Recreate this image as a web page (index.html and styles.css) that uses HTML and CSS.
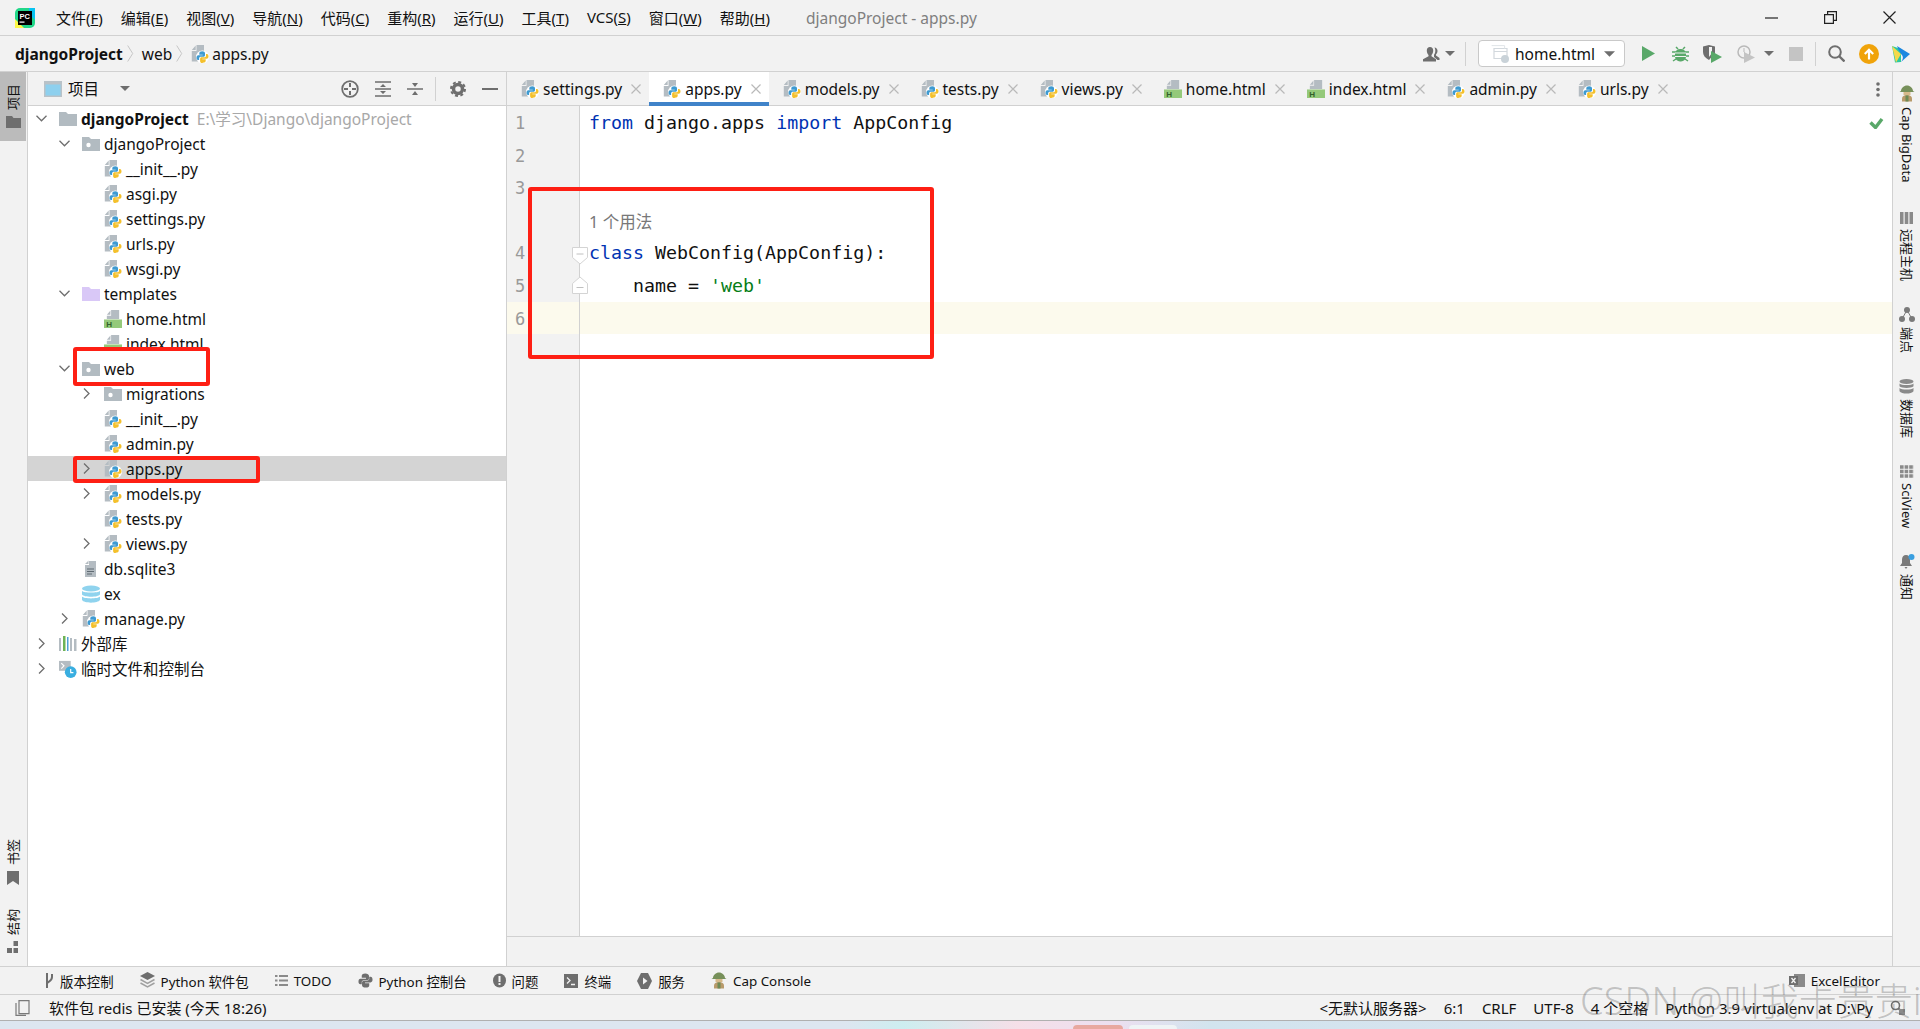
FILE: index.html
```html
<!DOCTYPE html>
<html lang="zh-CN">
<head>
    <meta charset="UTF-8">
    <title>djangoProject - apps.py</title>
    <link rel="stylesheet" href="styles.css">
</head>
<body>
<svg class="sprite" xmlns="http://www.w3.org/2000/svg">
    <symbol id="py" viewBox="0 0 18 18">
        <path fill="#b4bcc2" d="M5.500 0H13v7H7.500v9.500H.8V6h4.700zM.8 5l3.900-4.600V5z"/>
        <circle cx="11.500" cy="12" r="6.500" fill="#fff"/>
        <path fill="#3d9ad1" d="M11.300 6.300c-2 0-3 .7-3 2v1.400h3.400v.6H7.200c-1.100 0-1.700 1-1.700 2.400 0 1.300.6 2.300 1.600 2.300h1v-1.700c0-1 .8-1.600 1.800-1.600h2.600c.8 0 1.500-.6 1.500-1.500V8.300c0-1.100-1-2-2.700-2z"/>
        <path fill="#f4c02c" d="M11.700 17.700c2 0 3-.7 3-2v-1.400h-3.400v-.6h4.500c1.100 0 1.700-1 1.700-2.400 0-1.300-.6-2.300-1.600-2.300h-.9v1.700c0 1-.8 1.600-1.800 1.600h-2.600c-.8 0-1.500.6-1.500 1.500v2.400c0 1.100 1 1.900 2.600 2.500z"/>
    </symbol>
    <symbol id="html" viewBox="0 0 19 19">
        <path fill="#b4bcc2" d="M7.500 0H16v9.500H3V6h4.500zM3 5l3.800-4.500V5z"/>
        <rect y="10" width="19" height="9" fill="#94c97a"/>
        <text x="2.500" y="17.800" font-family="Liberation Sans" font-size="8.500" font-weight="700" fill="#33602a">H</text>
    </symbol>
    <symbol id="folder" viewBox="0 0 18 18">
        <path fill="#b2bbc1" d="M0 2h7l2 2h9v12H0z"/>
    </symbol>
    <symbol id="folder-dot" viewBox="0 0 18 18">
        <path fill="#b2bbc1" d="M0 2h7l2 2h9v12H0z"/>
        <circle cx="6.500" cy="10" r="2.200" fill="#fff"/>
    </symbol>
    <symbol id="folder-tpl" viewBox="0 0 18 18">
        <path fill="#d9c8f7" d="M0 2h7l2 2h9v12H0z"/>
    </symbol>
    <symbol id="down" viewBox="0 0 11 7">
        <path fill="none" stroke="#6e6e6e" stroke-width="1.300" d="M.5.800l5 5 5-5"/>
    </symbol>
    <symbol id="right" viewBox="0 0 11 11">
        <path fill="none" stroke="#6e6e6e" stroke-width="1.300" d="M3 .5l5 5-5 5"/>
    </symbol>
    <symbol id="crumb" viewBox="0 0 7 17">
        <path fill="none" stroke="#c6c6c6" d="M.7.500l5 8-5 8"/>
    </symbol>
    <symbol id="close" viewBox="0 0 10 10">
        <path fill="none" stroke="#b9b9b9" stroke-width="1.200" d="M.5.500l9 9m0-9l-9 9"/>
    </symbol>
    <symbol id="pyface" viewBox="0 0 16 16">
        <path fill="#6e6e6e" d="M7.800.500C5 .5 4 1.500 4 3v2h4.500v1H2.600C1.200 6 .5 7.200.5 9s.8 3 2 3H4V9.800c0-1.200 1-2 2.300-2h3.500c1 0 1.900-.9 1.900-2V3c0-1.500-1.600-2.500-3.900-2.500z"/>
        <path fill="#6e6e6e" d="M8.200 15.500c2.800 0 3.800-1 3.800-2.500v-2H7.500v-1h5.900c1.400 0 2.100-1.200 2.100-3s-.8-3-2-3H12v2.200c0 1.200-1 2-2.300 2H6.200c-1 0-1.900.9-1.900 2V13c0 1.500 1.600 2.500 3.900 2.500z"/>
    </symbol>
    <symbol id="cap" viewBox="0 0 16 17">
        <path fill="#77905a" d="M2 6c0-3 3-5.500 6-5.500S14 3 14 6l1.500 1h-15z"/>
        <rect x="4.500" y="7" width="7" height="3" fill="#d6b98a"/>
        <path fill="#b89a6a" d="M3 16.500v-3c0-2 2-3.500 5-3.500s5 1.500 5 3.500v3z"/>
        <path fill="#6d8a55" d="M6.500 10.500h3v6h-3z"/>
    </symbol>
</svg>

<header class="titlebar">
    <svg class="logo" width="20" height="20" viewBox="0 0 20 20">
        <rect width="20" height="20" rx="5" fill="#21d789"/>
        <path d="M20 0v12l-6-6V0z" fill="#07c3f2"/>
        <path d="M0 20v-9l9 9z" fill="#fcf84a"/>
        <rect x="3" y="3" width="14" height="14" fill="#000"/>
        <text x="4.500" y="10.500" font-family="Liberation Sans" font-size="7.500" font-weight="700" fill="#fff">PC</text>
        <rect x="4.500" y="13.500" width="5" height="1.200" fill="#fff"/>
    </svg>
    <nav class="menu">
        <span>文件(<u>F</u>)</span>
        <span>编辑(<u>E</u>)</span>
        <span>视图(<u>V</u>)</span>
        <span>导航(<u>N</u>)</span>
        <span>代码(<u>C</u>)</span>
        <span>重构(<u>R</u>)</span>
        <span>运行(<u>U</u>)</span>
        <span>工具(<u>T</u>)</span>
        <span>VCS(<u>S</u>)</span>
        <span>窗口(<u>W</u>)</span>
        <span>帮助(<u>H</u>)</span>
    </nav>
    <div class="window-title">djangoProject - apps.py</div>
    <div class="window-btns">
        <svg width="13" height="13" viewBox="0 0 13 13"><path stroke="#222" stroke-width="1.200" d="M0 7h13"/></svg>
        <svg width="13" height="13" viewBox="0 0 13 13"><path fill="none" stroke="#222" stroke-width="1.200" d="M.6 3.600h8.800v8.800H.6zM3.600 3.600V.6h8.800v8.800H9.400"/></svg>
        <svg width="13" height="13" viewBox="0 0 13 13"><path stroke="#222" stroke-width="1.200" d="M.5.500l12 12m0-12l-12 12"/></svg>
    </div>
</header>

<div class="navbar">
    <div class="crumbs">
        <b>djangoProject</b>
        <svg class="crumb-sep"><use href="#crumb"/></svg>
        <span>web</span>
        <svg class="crumb-sep"><use href="#crumb"/></svg>
        <svg class="ic crumb-file"><use href="#py"/></svg>
        <span>apps.py</span>
    </div>
    <div class="actions">
        <svg width="18" height="16" viewBox="0 0 18 16"><path fill="#6e6e6e" d="M7 1c2 0 3.200 1.500 3.200 3.500S9.300 8 8.500 9v1.200l4.500 3V15.500H0v-2.300l5.500-3V9c-.8-1-1.700-2.500-1.700-4.500S5 1 7 1z"/><path fill="#6e6e6e" d="M11.500 1.500c1.700 0 3 1.300 3 3.200 0 1.600-.7 3-1.500 3.800v1l3.500 2.500v2h-2l-3.500-3V8.800c.8-1 1.300-2.600 1.300-4.100 0-1-.2-2.200-.8-3.200z"/></svg>
        <svg class="caret user-caret" viewBox="0 0 10 5"><path d="M0 0h10L5 5z"/></svg>
        <i class="vsep sep-a"></i>
        <div class="run-combo">
            <svg width="18" height="18" viewBox="0 0 18 18"><path fill="none" stroke="#d2d8dd" stroke-width="1.200" d="M3 3.500h13v10H3zM3 6.500h13"/><path fill="none" stroke="#e1e5e8" d="M.6.600h13v3"/><circle cx="14" cy="14" r="4" fill="#c9d2d8"/></svg>
            <span>home.html</span>
            <svg class="caret" viewBox="0 0 10 5"><path d="M0 0h10L5 5z"/></svg>
        </div>
        <svg class="run" width="13" height="15" viewBox="0 0 13 15"><path fill="#59a869" d="M0 0l13 7.500L0 15z"/></svg>
        <svg class="bug" width="17" height="17" viewBox="0 0 17 17"><g fill="none" stroke="#59a869" stroke-width="1.500"><path d="M4 2l2 2M13 2l-2 2M0 7h17M0 11h17M1 16l3-2M16 16l-3-2"/></g><rect x="3" y="4" width="11" height="12.500" rx="5" fill="#59a869"/><path stroke="#f2f2f2" d="M3 8h11M3 11.500h11"/></svg>
        <svg class="cover" width="19" height="18" viewBox="0 0 19 18"><path fill="#6e6e6e" d="M0 1.500L6 0l6 1.500V8L6 15C2 13 0 10 0 7z"/><path fill="#f2f2f2" d="M6 2h3v6l-3 4z"/><path fill="#59a869" d="M8 6l11 6-11 6z"/></svg>
        <svg class="profile" width="18" height="18" viewBox="0 0 18 18"><circle cx="7" cy="7" r="6" fill="none" stroke="#b9b9b9" stroke-width="1.500"/><path fill="none" stroke="#b9b9b9" d="M7 3v4l2 2"/><path fill="#c4c4c4" d="M7 7l11 5.500L7 18z"/></svg>
        <svg class="caret profile-caret" viewBox="0 0 10 5"><path d="M0 0h10L5 5z"/></svg>
        <i class="stop"></i>
        <i class="vsep sep-b"></i>
        <svg class="search" width="17" height="17" viewBox="0 0 17 17"><circle cx="7" cy="7" r="5.800" fill="none" stroke="#6e6e6e" stroke-width="2"/><path stroke="#6e6e6e" stroke-width="2.400" d="M11 11l5.500 5.500"/></svg>
        <svg class="update" width="20" height="20" viewBox="0 0 20 20"><circle cx="10" cy="10" r="10" fill="#f0a30a"/><path fill="none" stroke="#fff" stroke-width="2.200" d="M10 15.500V6M5.800 10L10 5.800l4.200 4.200"/></svg>
        <svg class="brand" width="18" height="18" viewBox="0 0 18 18"><path fill="#2ac9a0" d="M0 1l9 3v13L3 17.500z"/><path fill="#f3d94b" d="M0 1l9 8-5 8.500z"/><path fill="#1b87e0" d="M5 1l13 8-9 8c2-3 3-5 0-8-1-2-3-5-4-8z"/></svg>
    </div>
</div>

<div class="workspace">
    <aside class="stripe stripe-left">
        <div class="stripe-btn is-active">
            <span>项目</span>
            <svg width="15" height="12" viewBox="0 0 15 12"><path fill="#6e6e6e" d="M0 0h6l1.500 2H15v10H0z"/></svg>
        </div>
        <div class="stripe-btn bookmarks">
            <span>书签</span>
            <svg width="12" height="14" viewBox="0 0 12 14"><path fill="#6e6e6e" d="M0 0h12v14L6 10l-6 4z"/></svg>
        </div>
        <div class="stripe-btn">
            <span>结构</span>
            <svg width="12" height="12" viewBox="0 0 12 12"><path fill="#6e6e6e" d="M6.500 0H11v5H6.500zM0 7h5v5H0zM6.500 7H11v5H6.500z"/></svg>
        </div>
    </aside>

    <section class="project">
        <div class="panel-head">
            <svg width="18" height="16" viewBox="0 0 18 16"><rect width="18" height="16" fill="#b9c2c8"/><rect x="1.500" y="3.500" width="15" height="11" fill="#8ed0ee"/></svg>
            <span class="panel-title">项目</span>
            <svg class="caret panel-caret" viewBox="0 0 10 5"><path d="M0 0h10L5 5z"/></svg>
            <div class="panel-tools">
                <svg width="18" height="18" viewBox="0 0 18 18"><circle cx="9" cy="9" r="7.800" fill="none" stroke="#6e6e6e" stroke-width="1.800"/><path stroke="#6e6e6e" stroke-width="2" d="M9 3v4M9 11v4M3 9h4M11 9h4"/></svg>
                <svg width="16" height="16" viewBox="0 0 16 16"><path stroke="#6e6e6e" stroke-width="1.500" d="M0 1h16M0 15h16M0 8h16" /><path fill="#6e6e6e" d="M8 3l3 3H5zM8 13l-3-3h6z"/></svg>
                <svg width="16" height="16" viewBox="0 0 16 16"><path stroke="#6e6e6e" stroke-width="1.500" d="M0 8h16"/><path fill="#6e6e6e" d="M8 6L5 2h6zM8 10l3 4H5z"/></svg>
                <i class="vsep"></i>
                <svg width="16" height="16" viewBox="0 0 16 16"><circle cx="8" cy="8" r="4.500" fill="none" stroke="#6e6e6e" stroke-width="3.500"/><circle cx="8" cy="8" r="7" fill="none" stroke="#6e6e6e" stroke-width="2" stroke-dasharray="3 2.500"/></svg>
                <svg width="16" height="16" viewBox="0 0 16 16"><path stroke="#6e6e6e" stroke-width="2" d="M0 8h16"/></svg>
            </div>
        </div>
        <ul class="tree">
            <li class="row d0"><svg class="arr"><use href="#down"/></svg><svg class="ic"><use href="#folder"/></svg><b>djangoProject</b><span class="path">E:\学习\Django\djangoProject</span></li>
            <li class="row d1"><svg class="arr"><use href="#down"/></svg><svg class="ic"><use href="#folder-dot"/></svg>djangoProject</li>
            <li class="row d2"><i class="arr"></i><svg class="ic"><use href="#py"/></svg>__init__.py</li>
            <li class="row d2"><i class="arr"></i><svg class="ic"><use href="#py"/></svg>asgi.py</li>
            <li class="row d2"><i class="arr"></i><svg class="ic"><use href="#py"/></svg>settings.py</li>
            <li class="row d2"><i class="arr"></i><svg class="ic"><use href="#py"/></svg>urls.py</li>
            <li class="row d2"><i class="arr"></i><svg class="ic"><use href="#py"/></svg>wsgi.py</li>
            <li class="row d1"><svg class="arr"><use href="#down"/></svg><svg class="ic"><use href="#folder-tpl"/></svg>templates</li>
            <li class="row d2"><i class="arr"></i><svg class="ic"><use href="#html"/></svg>home.html</li>
            <li class="row d2 row-cut"><i class="arr"></i><svg class="ic"><use href="#html"/></svg>index.html</li>
            <li class="row d1"><svg class="arr"><use href="#down"/></svg><svg class="ic"><use href="#folder-dot"/></svg>web</li>
            <li class="row d2"><svg class="arr"><use href="#right"/></svg><svg class="ic"><use href="#folder-dot"/></svg>migrations</li>
            <li class="row d2"><i class="arr"></i><svg class="ic"><use href="#py"/></svg>__init__.py</li>
            <li class="row d2"><i class="arr"></i><svg class="ic"><use href="#py"/></svg>admin.py</li>
            <li class="row d2 selected"><svg class="arr"><use href="#right"/></svg><svg class="ic"><use href="#py"/></svg>apps.py</li>
            <li class="row d2"><svg class="arr"><use href="#right"/></svg><svg class="ic"><use href="#py"/></svg>models.py</li>
            <li class="row d2"><i class="arr"></i><svg class="ic"><use href="#py"/></svg>tests.py</li>
            <li class="row d2"><svg class="arr"><use href="#right"/></svg><svg class="ic"><use href="#py"/></svg>views.py</li>
            <li class="row d1"><i class="arr"></i><svg class="ic" viewBox="0 0 18 18"><path fill="#b4bcc2" d="M7 1h7v16H3V5h4zM3 4l3.500-3.500V4z"/><path stroke="#5f6a72" d="M5 9h7M5 11.500h7M5 14h5"/></svg>db.sqlite3</li>
            <li class="row d1"><i class="arr"></i><svg class="ic" viewBox="0 0 18 18"><ellipse cx="9" cy="3.500" rx="9" ry="3" fill="#8fd3ee"/><path fill="#8fd3ee" d="M0 6c2 2 16 2 18 0v3.500c-2 3-16 3-18 0zM0 11.500c2 2.500 16 2.500 18 0V15c-2 3.500-16 3.500-18 0z"/></svg>ex</li>
            <li class="row d1"><svg class="arr"><use href="#right"/></svg><svg class="ic"><use href="#py"/></svg>manage.py</li>
            <li class="row d0"><svg class="arr"><use href="#right"/></svg><svg class="ic" viewBox="0 0 18 18"><path fill="#b4bcc2" d="M0 3h2v13H0zM11 3h2v13h-2zM15 4h2.500v12H15z"/><path fill="#6eb356" d="M4 1h2.500v15H4z"/><path fill="#4f9fd6" d="M8 2h1.500v14H8z"/></svg>外部库</li>
            <li class="row d0"><svg class="arr"><use href="#right"/></svg><svg class="ic" viewBox="0 0 20 20"><path fill="#b4bcc2" d="M0 1h13v11H0z"/><path fill="none" stroke="#fff" stroke-width="1.300" d="M2.500 3.500l3 3-3 3"/><circle cx="13" cy="13.500" r="6.500" fill="#39aee0"/><path fill="none" stroke="#fff" stroke-width="1.300" d="M13 10v4h3"/></svg>临时文件和控制台</li>
        </ul>
    </section>

    <main class="center">
        <div class="tabs">
            <div class="tab"><svg class="ic"><use href="#py"/></svg>settings.py<svg class="x"><use href="#close"/></svg></div>
            <div class="tab is-active"><svg class="ic"><use href="#py"/></svg>apps.py<svg class="x"><use href="#close"/></svg></div>
            <div class="tab"><svg class="ic"><use href="#py"/></svg>models.py<svg class="x"><use href="#close"/></svg></div>
            <div class="tab"><svg class="ic"><use href="#py"/></svg>tests.py<svg class="x"><use href="#close"/></svg></div>
            <div class="tab"><svg class="ic"><use href="#py"/></svg>views.py<svg class="x"><use href="#close"/></svg></div>
            <div class="tab"><svg class="ic"><use href="#html"/></svg>home.html<svg class="x"><use href="#close"/></svg></div>
            <div class="tab"><svg class="ic"><use href="#html"/></svg>index.html<svg class="x"><use href="#close"/></svg></div>
            <div class="tab"><svg class="ic"><use href="#py"/></svg>admin.py<svg class="x"><use href="#close"/></svg></div>
            <div class="tab"><svg class="ic"><use href="#py"/></svg>urls.py<svg class="x"><use href="#close"/></svg></div>
            <svg class="more" width="4" height="15" viewBox="0 0 4 15"><g fill="#6e6e6e"><circle cx="2" cy="2" r="1.800"/><circle cx="2" cy="7.500" r="1.800"/><circle cx="2" cy="13" r="1.800"/></g></svg>
        </div>
        <div class="editor">
            <div class="gutter">
                <div class="num">1</div>
                <div class="num">2</div>
                <div class="num">3</div>
                <div class="num"></div>
                <div class="num">4<svg class="fold fold-down" width="16" height="18" viewBox="0 0 16 18"><path fill="#fff" stroke="#d4d4d4" d="M.5.500h15v10L8 17 .5 10.500z"/><path stroke="#c0c0c0" d="M4.500 7h7"/></svg></div>
                <div class="num">5<svg class="fold fold-up" width="16" height="18" viewBox="0 0 16 18"><path fill="#fff" stroke="#d4d4d4" d="M.5 17.500h15v-10L8 1 .5 7.500z"/><path stroke="#c0c0c0" d="M4.500 11.500h7"/></svg></div>
                <div class="num is-current">6</div>
            </div>
            <div class="code">
                <div class="line"><em class="kw">from</em> django.apps <em class="kw">import</em> AppConfig</div>
                <div class="line"></div>
                <div class="line"></div>
                <div class="line hint">1 个用法</div>
                <div class="line"><em class="kw">class</em> WebConfig(AppConfig):</div>
                <div class="line">    name = <em class="str">'web'</em></div>
                <div class="line is-current"></div>
            </div>
            <svg class="inspect" width="20" height="12" viewBox="0 0 20 12"><path fill="none" stroke="#59a869" stroke-width="3.400" d="M1.500 5.500l5 5L13 2"/></svg>
        </div>
        <div class="editor-foot"></div>
    </main>

    <aside class="stripe stripe-right">
        <div class="stripe-btn cap-btn"><svg width="16" height="17" viewBox="0 0 16 17"><use href="#cap"/></svg><span>Cap BigData</span></div>
        <div class="stripe-btn"><svg width="13" height="12" viewBox="0 0 13 12"><path fill="#8a8a8a" d="M0 0h3.500v12H0zM4.700 0h3.600v12H4.700zM9.500 0H13v12H9.500z"/></svg><span>远程主机</span></div>
        <div class="stripe-btn"><svg width="16" height="15" viewBox="0 0 16 15"><g fill="#7a7a7a"><circle cx="8" cy="3" r="3"/><circle cx="3" cy="12" r="3"/><circle cx="13" cy="12" r="3"/></g><path stroke="#7a7a7a" d="M8 3l-5 9M8 3l5 9"/></svg><span>端点</span></div>
        <div class="stripe-btn"><svg width="15" height="15" viewBox="0 0 15 15"><g fill="#8a8a8a"><ellipse cx="7.500" cy="2.500" rx="7" ry="2.500"/><path d="M.5 4.500c2 2 12 2 14 0v2.800c-2 2.200-12 2.200-14 0zM.5 9c2 2 12 2 14 0v3.200c-2 3.100-12 3.100-14 0z"/></g></svg><span>数据库</span></div>
        <div class="stripe-btn"><svg width="14" height="13" viewBox="0 0 14 13"><path stroke="#8a8a8a" stroke-width="3.400" stroke-dasharray="3.600 1" d="M0 2h14M0 6.500h14M0 11h14"/></svg><span>SciView</span></div>
        <div class="stripe-btn"><svg width="16" height="15" viewBox="0 0 16 15"><path fill="#7a7a7a" d="M7 1c2.500 0 4 2 4 4.500V9l2 3H1l2-3V5.500C3 3 4.500 1 7 1zM5.500 13h3L7 15z"/><circle cx="12.500" cy="3" r="3" fill="#3a9fe0"/></svg><span>通知</span></div>
    </aside>
</div>

<div class="tools">
    <span class="tool"><svg width="9" height="16" viewBox="0 0 9 16"><path fill="none" stroke="#6e6e6e" stroke-width="2" d="M2 0v15M2 11c0-3 5-2 5-7V1"/></svg>版本控制</span>
    <span class="tool"><svg width="15" height="17" viewBox="0 0 15 17"><path fill="#6e6e6e" d="M7.500 0L15 4 7.500 8 0 4z"/><path fill="none" stroke="#a0a0a0" stroke-width="1.500" d="M.5 7.500l7 4 7-4M.5 11l7 4 7-4"/></svg>Python 软件包</span>
    <span class="tool"><svg width="13" height="13" viewBox="0 0 13 13"><path stroke="#8a8a8a" stroke-width="2" d="M0 2h2.500M4 2h9M0 6.500h2.500M4 6.500h9M0 11h2.500M4 11h9"/></svg>TODO</span>
    <span class="tool"><svg width="15" height="15"><use href="#pyface"/></svg>Python 控制台</span>
    <span class="tool"><svg width="13" height="15" viewBox="0 0 13 15"><ellipse cx="6.500" cy="7.500" rx="6.500" ry="7" fill="#6e6e6e"/><path stroke="#f2f2f2" stroke-width="2" d="M6.500 3v6M6.500 10v2"/></svg>问题</span>
    <span class="tool"><svg width="14" height="14" viewBox="0 0 14 14"><rect width="14" height="14" fill="#6e6e6e"/><path fill="none" stroke="#f2f2f2" stroke-width="1.300" d="M3 3.500l3 3-3 3M7 10.500h4"/></svg>终端</span>
    <span class="tool"><svg width="15" height="16" viewBox="0 0 15 16"><path fill="#6e6e6e" d="M4 0h7l4 8-4 8H4L0 8z"/><path fill="#f2f2f2" d="M6 4.500l4.500 3.500L6 11.500z"/></svg>服务</span>
    <span class="tool"><svg width="16" height="17"><use href="#cap"/></svg>Cap Console</span>
    <span class="tool tool-end"><svg width="16" height="15" viewBox="0 0 16 15"><rect x="5" y="1" width="11" height="13" fill="#8a8a8a"/><rect y="3" width="9" height="9" fill="#6e6e6e"/><path stroke="#f2f2f2" stroke-width="1.300" d="M2.500 5l4 5m0-5l-4 5"/></svg>ExcelEditor</span>
</div>

<footer class="status">
    <svg class="status-ico" width="15" height="16" viewBox="0 0 15 16"><path fill="none" stroke="#7a7a7a" stroke-width="1.200" d="M4 .6h10v13H4zM1 3v12.400h10"/></svg>
    <span>软件包 redis 已安装 (今天 18:26)</span>
    <div class="status-right">
        <span>&lt;无默认服务器&gt;</span>
        <span>6:1</span>
        <span>CRLF</span>
        <span>UTF-8</span>
        <span>4 个空格</span>
        <span>Python 3.9 virtualenv at D:\Py</span>
        <svg width="15" height="15" viewBox="0 0 15 15"><circle cx="5.500" cy="5.500" r="4" fill="none" stroke="#6e6e6e" stroke-width="1.600"/><path stroke="#6e6e6e" stroke-width="2" d="M8.500 8.500l6 6"/><rect x="9" y="9" width="6" height="6" fill="#8a8a8a"/></svg>
    </div>
</footer>

<div class="desktop"><i class="task task-red"></i><i class="task task-white"></i></div>

<!-- annotations drawn over the screenshot -->
<div class="mark mark-web"></div>
<div class="mark mark-apps"></div>
<div class="mark mark-code"></div>
<div class="watermark">CSDN @叫我卡贵贵i</div>
</body>
</html>
```

FILE: styles.css
```css
* {
    box-sizing: border-box;
}

html, body {
    margin: 0;
    height: 100%;
}

body {
    position: relative;
    display: flex;
    flex-direction: column;
    overflow: hidden;
    background: #f2f2f2;
    color: #111;
    font-family: "Noto Sans", "Noto Sans CJK SC", sans-serif;
    font-size: 15.5px;
}

svg {
    flex: none;
    display: block;
}

.sprite {
    display: none;
}

.ic {
    width: 18px;
    height: 18px;
    flex: none;
}

.caret {
    width: 10px;
    height: 5px;
    fill: #6e6e6e;
}

.vsep {
    display: block;
    flex: none;
    width: 1px;
    height: 24px;
    background: #d1d1d1;
}

/* title bar */
.titlebar {
    display: flex;
    align-items: center;
    flex: none;
    height: 36px;
    padding-left: 15px;
    border-bottom: 1px solid #d1d1d1;
}

.logo {
    margin-right: 21px;
}

.menu {
    display: flex;
    gap: 18px;
    font-size: 15px;
    white-space: nowrap;
}

.window-title {
    margin-left: 36px;
    color: #7f7f7f;
}

.window-btns {
    display: flex;
    gap: 46px;
    margin-left: auto;
    padding-right: 24px;
}

/* navigation bar */
.navbar {
    display: flex;
    align-items: center;
    justify-content: space-between;
    flex: none;
    height: 36px;
    padding-left: 15px;
    border-bottom: 1px solid #d1d1d1;
}

.crumbs {
    display: flex;
    align-items: center;
}

.crumb-sep {
    width: 7px;
    height: 17px;
    margin: 0 8px 0 4px;
}

.crumb-file {
    margin-right: 3px;
}

.actions {
    display: flex;
    align-items: center;
    padding-right: 10px;
}

.user-caret {
    margin-left: 4px;
}

.sep-a {
    margin: 0 12px 0 10px;
}

.run-combo {
    display: flex;
    align-items: center;
    width: 147px;
    height: 27px;
    padding-left: 12px;
    background: #fff;
    border: 1px solid #c9c9c9;
    border-radius: 4px;
}

.run-combo span {
    margin-left: 6px;
}

.run-combo .caret {
    margin-left: 9px;
    width: 11px;
    height: 6px;
}

.run {
    margin-left: 17px;
}

.bug {
    margin-left: 17px;
}

.cover {
    margin-left: 14px;
}

.profile {
    margin-left: 15px;
}

.profile-caret {
    margin-left: 9px;
}

.stop {
    display: block;
    width: 14px;
    height: 14px;
    margin-left: 15px;
    background: #c4c4c4;
}

.sep-b {
    margin: 0 12px;
}

.update {
    margin-left: 14px;
}

.brand {
    margin-left: 13px;
}

/* main area */
.workspace {
    display: flex;
    flex: 1;
    min-height: 0;
}

.stripe {
    display: flex;
    flex-direction: column;
    flex: none;
    font-size: 13px;
    line-height: 16px;
}

.stripe-btn {
    display: flex;
    align-items: center;
    flex-direction: column;
}

.stripe span {
    writing-mode: vertical-rl;
    text-orientation: sideways;
}

.stripe-left {
    width: 28px;
    padding-right: 1px;
    border-right: 1px solid #d1d1d1;
}

.stripe-left .stripe-btn {
    gap: 6px;
    padding: 12px 0 13px;
}

.stripe-left span {
    transform: rotate(180deg);
}

.stripe-left .is-active {
    background: #bbbbbb;
}

.stripe-left .bookmarks {
    margin-top: auto;
    padding-bottom: 12px;
}

.stripe-left .stripe-btn:last-child {
    padding-top: 12px;
    padding-bottom: 13px;
}

.stripe-right {
    width: 28px;
    padding-top: 13px;
    gap: 26px;
    border-left: 1px solid #d1d1d1;
}

.stripe-right .stripe-btn {
    gap: 5px;
}

.stripe-right .cap-btn {
    margin-bottom: 4px;
}

/* project tree */
.project {
    display: flex;
    flex-direction: column;
    flex: none;
    width: 479px;
    background: #fff;
    border-right: 1px solid #d1d1d1;
}

.panel-head {
    display: flex;
    align-items: center;
    flex: none;
    height: 34px;
    padding-left: 16px;
    background: #f2f2f2;
    border-bottom: 1px solid #d1d1d1;
}

.panel-title {
    margin-left: 6px;
}

.panel-caret {
    margin-left: 21px;
}

.panel-tools {
    display: flex;
    align-items: center;
    gap: 16px;
    margin-left: auto;
    padding-right: 8px;
}

.panel-tools .vsep {
    margin: 0 -2px 0 -4px;
}

.tree {
    margin: 0;
    padding: 0;
    list-style: none;
}

.row {
    display: flex;
    align-items: center;
    height: 25px;
    white-space: nowrap;
}

.row b {
    font-weight: 700;
}

.row .ic {
    margin-right: 4px;
}

.d0 { padding-left: 8px; }
.d1 { padding-left: 31px; }
.d2 { padding-left: 53px; }

.arr {
    display: block;
    flex: none;
    width: 11px;
    height: 11px;
    margin-right: 12px;
}

.path {
    margin-left: 8px;
    color: #a8a8a8;
}

.selected {
    background: #d4d4d4;
}

.row-cut {
    clip-path: inset(0 0 9px 0);
}

/* tabs */
.center {
    display: flex;
    flex-direction: column;
    flex: 1;
    min-width: 0;
}

.tabs {
    display: flex;
    flex: none;
    height: 34px;
    border-bottom: 1px solid #d1d1d1;
    white-space: nowrap;
}

.tab {
    display: flex;
    align-items: center;
    height: 34px;
    padding: 0 8px 0 14px;
}

.tab .ic {
    margin-right: 4px;
}

.tab .x {
    width: 10px;
    height: 10px;
    margin-left: 9px;
}

.tab.is-active {
    background: #fff;
    border-bottom: 4px solid #4083c9;
    padding-top: 4px;
}

.more {
    margin: 10px 12px 0 auto;
}

/* editor */
.editor {
    position: relative;
    display: flex;
    flex: 1;
    min-height: 0;
    background: #fff;
}

.gutter {
    flex: none;
    width: 73px;
    background: #f2f2f2;
    border-right: 1px solid #d1d1d1;
}

.num {
    position: relative;
    height: 32.6px;
    padding-left: 8px;
    color: #999;
    font-family: "DejaVu Sans Mono", monospace;
    font-size: 17px;
    line-height: 34px;
}

.fold {
    position: absolute;
    right: -9px;
    z-index: 1;
}

.fold-down {
    top: 11px;
}

.fold-up {
    top: 7px;
}

.code {
    flex: 1;
    font-family: "DejaVu Sans Mono", monospace;
    font-size: 18.3px;
}

.line {
    height: 32.6px;
    padding-left: 9px;
    line-height: 34px;
    white-space: pre;
}

.line em {
    font-style: normal;
}

.kw {
    color: #0033b3;
}

.str {
    color: #067d17;
}

.hint {
    color: #787878;
    font-family: "Noto Sans", "Noto Sans CJK SC", sans-serif;
    font-size: 16.5px;
    line-height: 36px;
}

.is-current {
    background: #fcfaed;
}

.inspect {
    position: absolute;
    top: 11px;
    right: 3px;
}

.editor-foot {
    flex: none;
    height: 30px;
    border-top: 1px solid #d1d1d1;
}

/* bottom tool windows */
.tools {
    display: flex;
    align-items: center;
    flex: none;
    gap: 26px;
    height: 28px;
    padding-left: 45px;
    border-top: 1px solid #d1d1d1;
    font-size: 13.4px;
    white-space: nowrap;
}

.tool {
    display: flex;
    align-items: center;
    gap: 6px;
}

.tool-end {
    margin-left: auto;
    margin-right: 40px;
}

.status {
    display: flex;
    align-items: center;
    flex: none;
    height: 26px;
    padding-left: 15px;
    border-top: 1px solid #d1d1d1;
    font-size: 15px;
    white-space: nowrap;
}

.status-ico {
    margin-right: 19px;
}

.status-right {
    display: flex;
    align-items: center;
    gap: 17px;
    margin-left: auto;
    padding-right: 15px;
}

.desktop {
    position: relative;
    flex: none;
    height: 9px;
    background: linear-gradient(90deg, #dde6f0 0, #dde6f0 44%, #cdeef0 47%, #f5dfe8 53%, #ecdff0 58%, #d2e4ee 63%, #dde2ee 100%);
    border-top: 1px solid #b0b0b0;
}

.task {
    position: absolute;
    top: 4px;
    bottom: 0;
    border-radius: 6px 6px 0 0;
}

.task-red {
    left: 1073px;
    width: 50px;
    background: #e8a8a0;
}

.task-white {
    left: 1129px;
    width: 48px;
    background: #eff4f6;
}

/* red boxes and watermark */
.mark {
    position: absolute;
    border: 4px solid #fe1f14;
    border-radius: 3px;
}

.mark-web {
    left: 73px;
    top: 347px;
    width: 137px;
    height: 39px;
}

.mark-apps {
    left: 73px;
    top: 456px;
    width: 187px;
    height: 27px;
}

.mark-code {
    left: 528px;
    top: 187px;
    width: 406px;
    height: 172px;
}

.watermark {
    position: absolute;
    left: 1580px;
    top: 971px;
    color: rgba(90, 90, 90, 0.32);
    font-size: 38px;
    font-weight: 300;
    white-space: nowrap;
}
```
